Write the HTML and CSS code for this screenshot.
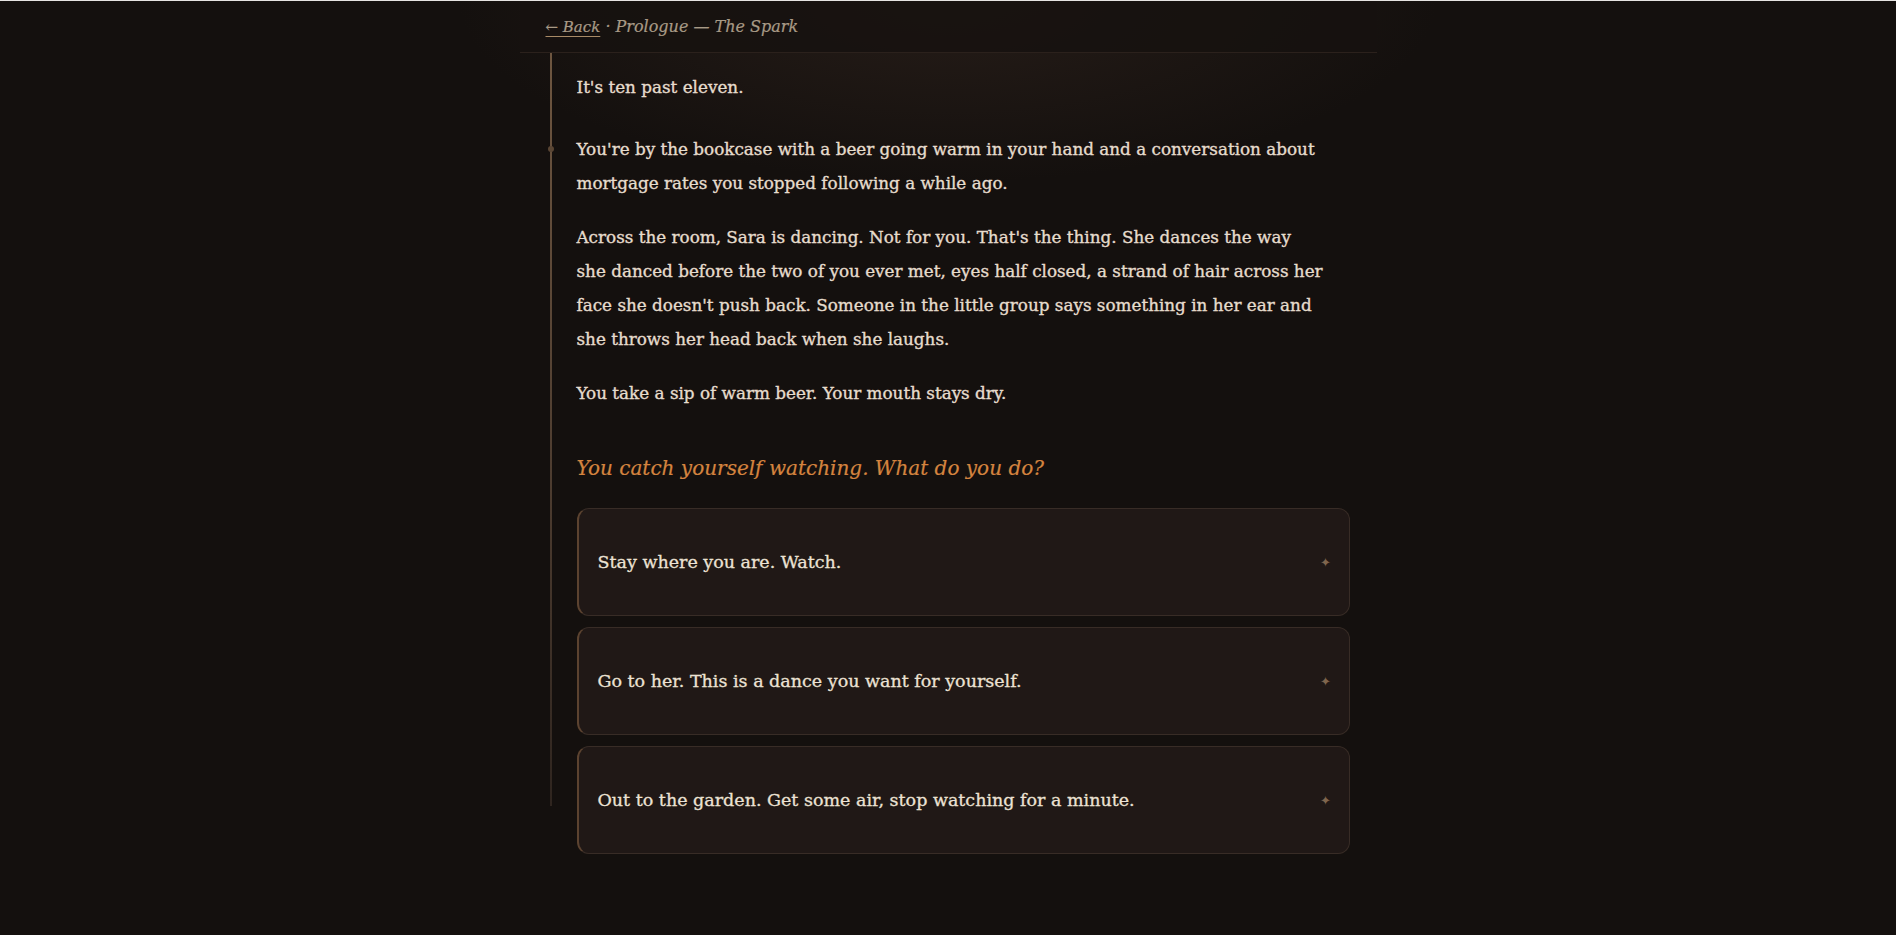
FILE: index.html
```html
<!DOCTYPE html>
<html lang="en">
<head>
<meta charset="utf-8">
<title>Prologue — The Spark</title>
<link rel="stylesheet" href="styles.css">
</head>
<body>
<div class="page">
  <header class="topbar">
    <a class="back" href="#">← Back</a><span class="crumb"> · Prologue — The Spark</span>
  </header>
  <main class="story">
    <p class="lead">It's ten past eleven.</p>
    <div class="beat">
      <span class="dot"></span>
      <p>You're by the bookcase with a beer going warm in your hand and a conversation about mortgage rates you stopped following a while ago.</p>
      <p>Across the room, Sara is dancing. Not for you. That's the thing. She dances the way<br>she danced before the two of you ever met, eyes half closed, a strand of hair across her face she doesn't push back. Someone in the little group says something in her ear and<br>she throws her head back when she laughs.</p>
      <p>You take a sip of warm beer. Your mouth stays dry.</p>
    </div>
    <p class="question">You catch yourself watching. What do you do?</p>
    <div class="choices">
      <button class="choice"><span>Stay where you are. Watch.</span><span class="star">✦</span></button>
      <button class="choice"><span>Go to her. This is a dance you want for yourself.</span><span class="star">✦</span></button>
      <button class="choice"><span>Out to the garden. Get some air, stop watching for a minute.</span><span class="star">✦</span></button>
    </div>
  </main>
</div>
</body>
</html>
```
FILE: styles.css
```css
html, body {
  margin: 0;
  padding: 0;
}
body {
  min-height: 935px;
  box-sizing: border-box;
  border-top: 1px solid #e6e4e2;
  background:
    radial-gradient(ellipse 700px 260px at 50% 0%, rgba(60, 44, 36, 0.45), rgba(20, 16, 14, 0) 70%),
    #14100e;
  color: #e6dccd;
  font-family: "DejaVu Serif", "Liberation Serif", serif;
}
.page {
  width: 857px;
  margin: 0 auto;
}
.topbar {
  height: 52px;
  box-sizing: border-box;
  padding: 0 26px;
  display: flex;
  align-items: center;
  background: rgba(22, 18, 15, 0.85);
  border-bottom: 1px solid #2b211c;
  font-style: italic;
  font-size: 16px;
  color: #a89a86;
  -webkit-text-stroke: 0.2px currentColor;
}
.back {
  color: #a89a86;
  text-decoration: underline;
  text-decoration-color: #a88a66;
  text-underline-offset: 4px;
  font-size: 15px;
}
.crumb {
  white-space: pre;
}
.story {
  margin-left: 30px;
  padding: 5px 27px 0 27px;
  position: relative;
}
.story::before {
  content: "";
  position: absolute;
  left: 0;
  top: 0;
  bottom: 48px;
  width: 2px;
  background: linear-gradient(to bottom, #6e5640, #4e3d30 55%, #2f251f);
}
.story p {
  margin: 0;
  font-size: 16.8px;
  line-height: 34px;
  -webkit-text-stroke: 0.35px currentColor;
}
.lead {
  padding-top: 12px;
  margin-bottom: 28px !important;
}
.beat {
  position: relative;
}
.beat p {
  margin-bottom: 20px;
}
.dot {
  position: absolute;
  left: -29px;
  top: 14px;
  width: 6px;
  height: 6px;
  border-radius: 50%;
  background: #5a4634;
}
.story .question {
  margin-top: 41px;
  margin-bottom: 23px;
  font-style: italic;
  font-size: 20px;
  color: #d4843f;
  -webkit-text-stroke: 0.2px currentColor;
}
.choices {
  display: flex;
  flex-direction: column;
  gap: 11px;
  width: 773px;
}
.choice {
  display: flex;
  align-items: center;
  justify-content: space-between;
  height: 108px;
  padding: 0 18px 0 19px;
  background: #201816;
  border: 1px solid #382c26;
  border-left: 2px solid #5c4330;
  border-radius: 12px;
  color: #ece2d4;
  font-family: "DejaVu Serif", "Liberation Serif", serif;
  font-size: 17.5px;
  text-align: left;
  cursor: pointer;
  -webkit-text-stroke: 0.3px currentColor;
}
.star {
  color: #7f654d;
  font-size: 13px;
  -webkit-text-stroke: 0;
}
```
